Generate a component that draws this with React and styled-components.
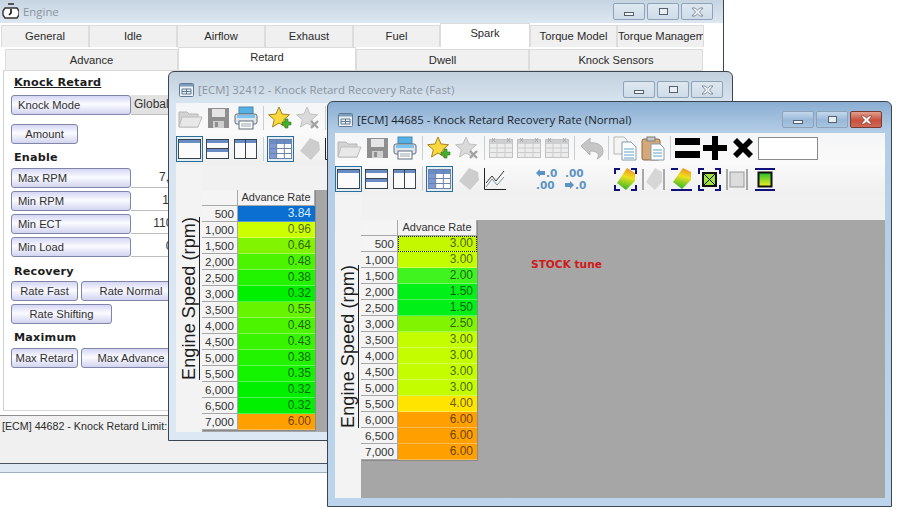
import React from "react";
import styled, { createGlobalStyle } from "styled-components";

const GlobalStyle = createGlobalStyle`
  html, body { margin: 0; padding: 0; background: #fff; }
  #root { width: 897px; height: 511px; position: relative; overflow: hidden; }
`;

const Desktop = styled.div`
  position: relative;
  width: 897px;
  height: 511px;
  font-family: "Liberation Sans", Arial, sans-serif;
  font-size: 11px;
  color: #222;
`;

/* windows sit on a free desktop, so they are the only absolute parts */
const Win = styled.div`
  position: absolute;
  left: ${(p) => p.$x}px;
  top: ${(p) => p.$y}px;
  width: ${(p) => p.$w}px;
  height: ${(p) => p.$h}px;
  box-sizing: border-box;
  border: 1px solid #3c4650;
  border-radius: 6px 6px 0 0;
  display: flex;
  flex-direction: column;
  padding: 0 6px 8px 7px;
  background: ${(p) =>
    p.$active
      ? "linear-gradient(180deg,#8aaed2 0,#b4cde6 30px,#bcd4ec 100%)"
      : "linear-gradient(180deg,#c2d0de 0,#d8e4ef 30px,#dce8f3 100%)"};
`;

const TitleBar = styled.div`
  height: 31px;
  box-sizing: border-box;
  padding: 4px 0 0 3px;
  flex: none;
  display: flex;
  align-items: center;
  gap: 4px;
`;

const TitleText = styled.span`
  flex: 1;
  font-family: "Open Sans", "Noto Sans", sans-serif;
  font-size: 11.4px;
  white-space: nowrap;
  color: ${(p) => (p.$active ? "#20262c" : "#8b959f")};
`;

const Caption = styled.div`
  display: flex;
  gap: 2px;
  padding-right: ${(p) => p.$pr || 3}px;
`;

const CapBtn = styled.div`
  width: 32px;
  height: 17px;
  box-sizing: border-box;
  border: 1px solid ${(p) => (p.$close && p.$active ? "#7a3a30" : "#8ea3b8")};
  border-radius: 2px;
  display: flex;
  align-items: center;
  justify-content: center;
  background: ${(p) =>
    p.$close && p.$active
      ? "linear-gradient(180deg,#e0a090,#c9503c 55%,#cf6a58)"
      : p.$active
      ? "linear-gradient(180deg,#c4d8ec,#98b8d8 55%,#a8c4e0)"
      : "linear-gradient(180deg,#dde7f0,#cfdce8)"};
`;

const MinGlyph = styled.span`
  width: 10px;
  height: 4px;
  margin-top: 4px;
  border: 1px solid #55606c;
  background: #f2f5f8;
  box-sizing: border-box;
`;

const MaxGlyph = styled.span`
  width: 9px;
  height: 7px;
  border: 1px solid #55606c;
  background: #e8eef4;
  box-sizing: border-box;
`;

const Client = styled.div`
  flex: 1;
  min-height: 0;
  display: flex;
  flex-direction: column;
  background: #f1f1f1;
`;

const ToolRow = styled.div`
  height: ${(p) => p.$h}px;
  flex: none;
  display: flex;
  align-items: center;
  padding-left: ${(p) => p.$pl}px;
  overflow: hidden;
  background: ${(p) => p.$bg};
`;

const Slot = styled.div`
  flex: none;
  margin-left: ${(p) => p.$ml || 0}px;
  display: flex;
`;

const Sep = styled.div`
  flex: none;
  width: 1px;
  height: 24px;
  margin-left: ${(p) => p.$ml}px;
  background: #c9ced3;
`;

const Selected = styled.div`
  flex: none;
  width: 27px;
  height: 26px;
  box-sizing: border-box;
  margin-left: ${(p) => p.$ml || 0}px;
  border: 1px solid #2c6f96;
  background: #e2eef6;
  display: flex;
  align-items: center;
  justify-content: center;
`;

const ValueBox = styled.div`
  flex: none;
  width: 60px;
  height: 23px;
  margin-left: 5px;
  box-sizing: border-box;
  border: 1px solid #8a8a8a;
  background: #fff;
`;

const Body = styled.div`
  flex: 1;
  min-height: 0;
  display: flex;
`;

const AxisCol = styled.div`
  width: 26px;
  flex: none;
  display: flex;
  align-items: center;
  justify-content: center;
  background: #f3f3f3;
`;

const AxisLabel = styled.span`
  writing-mode: vertical-rl;
  transform: rotate(180deg);
  font-size: 18px;
  letter-spacing: 0.1px;
  text-decoration: underline;
  white-space: nowrap;
  color: #1d1d1d;
`;

const Main = styled.div`
  flex: 1;
  min-width: 0;
  display: flex;
  flex-direction: column;
`;

const Spacer = styled.div`
  height: 25px;
  flex: none;
`;

const GridArea = styled.div`
  flex: 1;
  position: relative;
  background: #a6a6a6;
`;

const Table = styled.div`
  display: grid;
  grid-template-columns: ${(p) => p.$c1}px ${(p) => p.$c2}px;
  grid-auto-rows: 16px;
  width: max-content;
  box-shadow: 1px 1px 0 #8a8a8a;
`;

const HeadCell = styled.div`
  background: #f4f4f4;
  border: 1px solid #a8a8a8;
  border-width: 0 1px 1px 0;
  box-sizing: border-box;
  font-size: ${(p) => (p.$right ? 11.6 : 11)}px;
  line-height: 15px;
  text-align: ${(p) => (p.$right ? "right" : "center")};
  padding-right: ${(p) => (p.$right ? 3 : 0)}px;
  color: #333;
  white-space: nowrap;
`;

const ValCell = styled.div`
  background: ${(p) => p.$bg};
  box-sizing: border-box;
  border-bottom: 1px solid rgba(255, 255, 255, 0.3);
  outline: ${(p) => (p.$focus ? "1px dotted #222" : "none")};
  outline-offset: -1px;
  font-size: 12px;
  line-height: 15px;
  text-align: right;
  padding-right: 4px;
  color: ${(p) => (p.$light ? "#d8ecff" : "rgba(0,0,0,.62)")};
`;

const StockNote = styled.span`
  position: absolute;
  left: 170px;
  top: 38px;
  font-family: "DejaVu Sans", sans-serif;
  font-weight: 700;
  font-size: 10.6px;
  color: #cf1a1a;
`;

/* Engine window parts */
const EngineWin = styled.div`
  position: absolute;
  left: 0;
  top: 0;
  width: 724px;
  height: 473px;
  box-sizing: border-box;
  border-right: 1px solid #3c4650;
  border-bottom: 1px solid #9fb0c0;
  display: flex;
  flex-direction: column;
  background: #dfe9f3;
`;

const EngineTitle = styled.div`
  height: 23px;
  flex: none;
  display: flex;
  align-items: center;
  padding-left: 2px;
  gap: 4px;
  background: linear-gradient(180deg, #c6d4e2, #dde7f1);
`;

const EngineClient = styled.div`
  flex: 1;
  min-height: 0;
  display: flex;
  flex-direction: column;
  background: #fff;
  margin-bottom: 8px;
  border-bottom: 1px solid #4a545e;
`;

const TabRow = styled.div`
  display: flex;
  width: 703px;
  box-sizing: border-box;
  height: ${(p) => p.$h}px;
  flex: none;
  align-items: flex-end;
  padding-left: ${(p) => p.$pl}px;
`;

const Tab = styled.div`
  width: ${(p) => p.$w}px;
  flex: none;
  box-sizing: border-box;
  height: ${(p) => (p.$on ? p.$tall : p.$tall - 2)}px;
  border: 1px solid #dcdcdc;
  border-bottom: none;
  background: ${(p) => (p.$on ? "#fff" : "#f0f0f0")};
  text-align: center;
  font-size: 11.2px;
  line-height: ${(p) => (p.$on ? 19 : 21)}px;
  white-space: nowrap;
  overflow: hidden;
  color: #2a2a2a;
`;

const Panel = styled.div`
  flex: 1;
  min-height: 0;
  margin: 0 0 4px 3px;
  width: 700px;
  box-sizing: border-box;
  border-left: 1px solid #cfcfcf;
  border-top: 1px solid #d8d8d8;
  border-bottom: 1px solid #d8d8d8;
  padding: 4px 0 0 7px;
  display: flex;
  flex-direction: column;
  background: #fff;
`;

const Heading = styled.div`
  font-family: "DejaVu Sans", sans-serif;
  font-weight: 700;
  font-size: 11.2px;
  line-height: 14px;
  letter-spacing: 0.2px;
  color: #1c1c1c;
  margin: ${(p) => p.$m || "0"};
  text-decoration: ${(p) => (p.$u ? "underline" : "none")};
`;

const Row = styled.div`
  display: flex;
  height: 20px;
  gap: ${(p) => p.$gap || 0}px;
  margin-top: ${(p) => p.$mt || 0}px;
`;

const PurpleBtn = styled.div`
  width: ${(p) => p.$w}px;
  flex: none;
  box-sizing: border-box;
  height: 20px;
  border: 1px solid #7f86a8;
  border-radius: 3px;
  background: linear-gradient(180deg, #d4d6f4 0, #fbfbff 45%, #d2d4f0 100%);
  line-height: 18px;
  font-size: 11.2px;
  text-align: ${(p) => (p.$left ? "left" : "center")};
  padding-left: ${(p) => (p.$left ? 6 : 0)}px;
  color: #2f2f2f;
  white-space: nowrap;
`;

const FieldVal = styled.div`
  width: 58px;
  flex: none;
  box-sizing: border-box;
  height: 20px;
  line-height: 19px;
  text-align: ${(p) => (p.$grey ? "left" : "right")};
  font-size: 12px;
  border-bottom: 1px solid #bdbdbd;
  background: ${(p) => (p.$grey ? "#e2e2e2" : "#fff")};
  padding: ${(p) => (p.$grey ? "0 0 0 3px" : "0")};
  color: #333;
`;

const StatusArea = styled.div`
  flex: none;
  height: 44px;
  background: #f0f0f0;
  border-top: 1px solid #8e8e8e;
  padding: 3px 0 0 2px;
  font-size: 10.7px;
  line-height: 15px;
  color: #2c2c2c;
  white-space: nowrap;
`;

/* icons */
const Folder = () => (
  <svg width="25" height="22" viewBox="0 0 25 22">
    <path d="M1 5h8l2 2h9v13H1z" fill="#d3d3d3" stroke="#b5b5b5" />
    <path d="M1 20l3-10h20l-4 10z" fill="#e8e8e8" stroke="#bdbdbd" />
  </svg>
);
const Floppy = () => (
  <svg width="21" height="22" viewBox="0 0 21 22">
    <path d="M0 1h21v20H0z" fill="#8f8f8f" />
    <rect x="4" y="2" width="13" height="8" fill="#e4e4e4" />
    <rect x="5" y="14" width="11" height="7" fill="#cfcfcf" />
    <rect x="7" y="15" width="3" height="5" fill="#8f8f8f" />
  </svg>
);
const Printer = () => (
  <svg width="24" height="24" viewBox="0 0 24 24">
    <rect x="5" y="1" width="14" height="7" fill="#55b0e6" stroke="#4c86a8" />
    <rect x="1" y="8" width="22" height="10" rx="2" fill="#dfe5ea" stroke="#5f6f7c" />
    <rect x="3" y="9" width="18" height="3" fill="#7cc4ee" />
    <rect x="5" y="15" width="14" height="8" fill="#fff" stroke="#5f6f7c" />
    <path d="M7 18h10M7 20h10" stroke="#9aa5ae" />
  </svg>
);
const starPath = "M11 1l3 7 7.500 .7-5.700 5 1.800 7.300L11 17l-6.500 4 1.800-7.300-5.700-5L8 8z";
const StarAdd = () => (
  <svg width="25" height="24" viewBox="0 0 25 24">
    <path d={starPath} fill="#f8d83c" stroke="#a8841e" />
    <path d="M17 13h3v3h3v3h-3v3h-3v-3h-3v-3h3z" fill="#46b030" stroke="#2c7a1e" strokeWidth=".6" />
  </svg>
);
const StarGrey = () => (
  <svg width="24" height="24" viewBox="0 0 24 24">
    <path d={starPath} fill="#dadada" stroke="#c0c0c0" />
    <path d="M15 15l7 7M22 15l-7 7" stroke="#a2a2a2" strokeWidth="2.400" />
  </svg>
);
const GridGrey = () => (
  <svg width="24" height="22" viewBox="0 0 24 22">
    <rect x=".5" y="2.500" width="23" height="18" fill="#ececec" stroke="#c2c2c2" />
    <rect x="1" y="3" width="22" height="4" fill="#cfcfcf" />
    <path d="M1 11h22M1 15.500h22M8 3v17M16 3v17" stroke="#cbcbcb" />
    <path d="M3 1l3 4M6 1L3 5M18 1l3 4M21 1l-3 4" stroke="#a8a8a8" />
  </svg>
);
const Undo = () => (
  <svg width="24" height="24" viewBox="0 0 24 24">
    <path d="M1 10l9-8v5c8-1 13 3 13 8 0 4-2 6-6 8 2-3 3-8-7-8v4z" fill="#c6c6c6" stroke="#b4b4b4" />
  </svg>
);
const Copy = () => (
  <svg width="24" height="25" viewBox="0 0 24 25">
    <path d="M1 1h10l3 3v14H1z" fill="#f4f4f4" stroke="#b9b9b9" />
    <path d="M9 6h9l5 5v13H9z" fill="#fff" stroke="#8a9aa8" />
    <path d="M11 13h10M11 16h10M11 19h10M11 22h10" stroke="#5ea0cc" />
  </svg>
);
const Paste = () => (
  <svg width="24" height="25" viewBox="0 0 24 25">
    <rect x="1" y="3" width="18" height="21" rx="2" fill="#d4a878" stroke="#8a6a48" />
    <rect x="6" y="1" width="8" height="4" fill="#c8c8c8" stroke="#7a7a7a" />
    <path d="M10 8h9l4 4v12H10z" fill="#fff" stroke="#8a9aa8" />
    <path d="M12 14h9M12 17h9M12 20h9" stroke="#5ea0cc" />
  </svg>
);
const Equals = () => (
  <svg width="25" height="20" viewBox="0 0 25 20"><path d="M0 0h25v7H0zM0 13h25v7H0z" fill="#000" /></svg>
);
const Plus = () => (
  <svg width="24" height="24" viewBox="0 0 24 24"><path d="M9 0h6v9h9v6h-9v9H9v-9H0V9h9z" fill="#000" /></svg>
);
const Times = () => (
  <svg width="20" height="20" viewBox="0 0 20 20"><path d="M0 4l4-4 6 6 6-6 4 4-6 6 6 6-4 4-6-6-6 6-4-4 6-6z" fill="#000" /></svg>
);
const PaneFull = () => (
  <svg width="23" height="20" viewBox="0 0 24 20" preserveAspectRatio="none">
    <rect x=".5" y=".5" width="23" height="19" fill="#fbfbfb" stroke="#33414c" />
    <rect x="1" y="1" width="22" height="3" fill="#6a8cc4" />
  </svg>
);
const PaneRows = () => (
  <svg width="23" height="20" viewBox="0 0 24 20" preserveAspectRatio="none">
    <rect x=".5" y=".5" width="23" height="19" fill="#fbfbfb" stroke="#33414c" />
    <rect x="1" y="1" width="22" height="3" fill="#6a8cc4" />
    <rect x="1" y="10" width="22" height="3" fill="#6a8cc4" />
    <path d="M1 9.500h22" stroke="#33414c" />
  </svg>
);
const PaneCols = () => (
  <svg width="23" height="20" viewBox="0 0 24 20" preserveAspectRatio="none">
    <rect x=".5" y=".5" width="23" height="19" fill="#fbfbfb" stroke="#33414c" />
    <rect x="1" y="1" width="22" height="3" fill="#6a8cc4" />
    <path d="M12 1v18" stroke="#33414c" />
  </svg>
);
const GridBlue = () => (
  <svg width="23" height="20" viewBox="0 0 24 20" preserveAspectRatio="none">
    <rect x=".5" y=".5" width="23" height="19" fill="#fff" stroke="#6a7fa8" />
    <rect x="1" y="1" width="22" height="4" fill="#6a8cc4" />
    <rect x="1" y="5" width="7" height="14" fill="#7f98d4" />
    <path d="M1 9.500h22M1 14.500h22M8 1v18M16 1v18" stroke="#6a7fa8" />
  </svg>
);
const Diamond = () => (
  <svg width="21" height="24" viewBox="0 0 21 24">
    <path d="M11 1l9 4 1 8-9 10L1 14z" fill="#cdcdcd" />
  </svg>
);
const LineChart = () => (
  <svg width="22" height="22" viewBox="0 0 22 22">
    <path d="M.5 0v21.500H22" fill="none" stroke="#222" />
    <path d="M2 15l6-7 4 5 8-10" fill="none" stroke="#333" />
    <path d="M2 19l6-8 5 6 7-8" fill="none" stroke="#7d8f9c" />
  </svg>
);
const DecLeft = () => (
  <svg width="24" height="24" viewBox="0 0 24 24" fontFamily="DejaVu Sans" fontWeight="700" fontSize="10.500" fill="#5b93c4">
    <path d="M1 6l4-4v2h5v4H5v2z" fill="#5b93c4" />
    <text x="11" y="10">.0</text>
    <text x="1" y="22">.00</text>
  </svg>
);
const DecRight = () => (
  <svg width="24" height="24" viewBox="0 0 24 24" fontFamily="DejaVu Sans" fontWeight="700" fontSize="10.500" fill="#5b93c4">
    <text x="1" y="10">.00</text>
    <path d="M1 16h5v-2l4 4-4 4v-2H1z" fill="#5b93c4" />
    <text x="11" y="22">.0</text>
  </svg>
);
const Brackets = ({ color = "#10107a" }) => (
  <path d="M1 6V1h5M17 1h5v5M1 17v5h5M17 22h5v-5" fill="none" stroke={color} strokeWidth="2" />
);
const HeatStops = () => (
  <>
    <stop offset="0" stopColor="#f09020" />
    <stop offset=".4" stopColor="#eee020" />
    <stop offset="1" stopColor="#28b828" />
  </>
);
const ColorDiamond = () => (
  <svg width="23" height="23" viewBox="0 0 23 23">
    <defs>
      <linearGradient id="heatA" x1=".6" y1="0" x2=".4" y2="1"><HeatStops /></linearGradient>
    </defs>
    <Brackets />
    <path d="M13 0l8 5v8l-9 9-9-7z" fill="url(#heatA)" />
  </svg>
);
const GreyDiamond = () => (
  <svg width="23" height="23" viewBox="0 0 23 23">
    <path d="M1 1v21M22 1v21" stroke="#a8a8a8" strokeWidth="2" />
    <path d="M13 0l7 4v10l-7 8-9-8z" fill="#d6d6d6" />
  </svg>
);
const ColorFlat = () => (
  <svg width="21" height="23" viewBox="0 0 21 23">
    <defs>
      <linearGradient id="heatB" x1=".6" y1="0" x2=".4" y2="1"><HeatStops /></linearGradient>
    </defs>
    <path d="M0 22h21" stroke="#10107a" strokeWidth="2" />
    <path d="M0 1h7" stroke="#10107a" strokeWidth="2" />
    <path d="M12 0l8 4v8l-9 9-9-7z" fill="url(#heatB)" />
  </svg>
);
const BoxedX = () => (
  <svg width="23" height="23" viewBox="0 0 23 23">
    <Brackets />
    <rect x="5" y="5" width="13" height="13" fill="#a0e040" stroke="#101010" strokeWidth="2" />
    <path d="M5 5l13 13M18 5L5 18" stroke="#101010" />
  </svg>
);
const GreyPanel = () => (
  <svg width="22" height="23" viewBox="0 0 22 23">
    <path d="M1 1v21M21 1v21" stroke="#a8a8a8" strokeWidth="2" />
    <rect x="4" y="4" width="14" height="15" fill="#dcdcdc" stroke="#9a9a9a" />
  </svg>
);
const GreenPanel = () => (
  <svg width="20" height="23" viewBox="0 0 20 23">
    <defs>
      <linearGradient id="heatC" x1="0" y1="0" x2="0" y2="1">
        <stop offset="0" stopColor="#20c030" />
        <stop offset="1" stopColor="#f4f020" />
      </linearGradient>
    </defs>
    <path d="M0 1h20M0 22h20" stroke="#10107a" strokeWidth="2" />
    <rect x="3.500" y="4.500" width="13" height="14" fill="url(#heatC)" stroke="#101010" strokeWidth="2" />
  </svg>
);
const WinIcon = () => (
  <svg width="15" height="14" viewBox="0 0 15 14">
    <rect x=".5" y=".5" width="14" height="13" rx="1" fill="#eef2f6" stroke="#5f7a94" />
    <rect x="1" y="1" width="13" height="2.500" fill="#7d9cbc" />
    <path d="M3 6h9v5H3zM7.500 6v5M3 8.500h9" fill="none" stroke="#5f7a94" />
  </svg>
);
const EngineIcon = () => (
  <svg width="17" height="17" viewBox="0 0 17 17">
    <rect x="6" y="0" width="6" height="2" fill="#555" />
    <path d="M3 5h12l2 3v4l-2 3H3L1 12V8z" fill="#fff" stroke="#333" strokeWidth="1.400" />
    <path d="M9 6v4l-2 2" stroke="#111" fill="none" strokeWidth="1.600" />
  </svg>
);
const CloseGlyph = ({ active }) => (
  <svg width="13" height="10" viewBox="0 0 13 10">
    <path d="M1 1h3l2.500 2L9 1h3L8.500 5 12 9H9L6.500 7 4 9H1l3.500-4z" fill={active ? "#fff" : "#e8eef4"} stroke={active ? "#8a3a2c" : "#66727e"} strokeWidth=".7" />
  </svg>
);

const CaptionBtns = ({ active, pr }) => (
  <Caption $pr={pr}>
    <CapBtn $active={active}><MinGlyph /></CapBtn>
    <CapBtn $active={active}><MaxGlyph /></CapBtn>
    <CapBtn $active={active} $close><CloseGlyph active={active} /></CapBtn>
  </Caption>
);

const Toolbars = () => (
  <>
    <ToolRow $h={30} $pl={2} $bg="linear-gradient(180deg,#f4f5f6,#fafafa)">
      <Slot><Folder /></Slot>
      <Slot $ml={5}><Floppy /></Slot>
      <Slot $ml={5}><Printer /></Slot>
      <Sep $ml={5} />
      <Slot $ml={4}><StarAdd /></Slot>
      <Slot $ml={3}><StarGrey /></Slot>
      <Sep $ml={5} />
      <Slot $ml={4}><GridGrey /></Slot>
      <Slot $ml={4}><GridGrey /></Slot>
      <Slot $ml={4}><GridGrey /></Slot>
      <Sep $ml={5} />
      <Slot $ml={5}><Undo /></Slot>
      <Sep $ml={4} />
      <Slot $ml={4}><Copy /></Slot>
      <Slot $ml={4}><Paste /></Slot>
      <Sep $ml={5} />
      <Slot $ml={4}><Equals /></Slot>
      <Slot $ml={3}><Plus /></Slot>
      <Slot $ml={6}><Times /></Slot>
      <ValueBox />
    </ToolRow>
    <ToolRow $h={32} $pl={0} $bg="linear-gradient(180deg,#fafafa,#efefef)">
      <Selected><PaneFull /></Selected>
      <Slot $ml={3}><PaneRows /></Slot>
      <Slot $ml={5}><PaneCols /></Slot>
      <Sep $ml={6} />
      <Selected $ml={3}><GridBlue /></Selected>
      <Slot $ml={5}><Diamond /></Slot>
      <Slot $ml={5}><LineChart /></Slot>
      <Slot $ml={29}><DecLeft /></Slot>
      <Slot $ml={5}><DecRight /></Slot>
      <Slot $ml={26}><ColorDiamond /></Slot>
      <Slot $ml={5}><GreyDiamond /></Slot>
      <Slot $ml={6}><ColorFlat /></Slot>
      <Slot $ml={6}><BoxedX /></Slot>
      <Slot $ml={5}><GreyPanel /></Slot>
      <Slot $ml={7}><GreenPanel /></Slot>
    </ToolRow>
  </>
);

const fastRows = [
  ["500", "3.84", "#0b6fd2", true],
  ["1,000", "0.96", "#ccff00"],
  ["1,500", "0.64", "#80f400"],
  ["2,000", "0.48", "#4cf400"],
  ["2,500", "0.38", "#22f400"],
  ["3,000", "0.32", "#00f000"],
  ["3,500", "0.55", "#66f400"],
  ["4,000", "0.48", "#4cf400"],
  ["4,500", "0.43", "#38f400"],
  ["5,000", "0.38", "#22f400"],
  ["5,500", "0.35", "#14f400"],
  ["6,000", "0.32", "#00f000"],
  ["6,500", "0.32", "#00f000"],
  ["7,000", "6.00", "#ffa000"],
];

const normalRows = [
  ["500", "3.00", "#c4f800"],
  ["1,000", "3.00", "#c4fc00"],
  ["1,500", "2.00", "#40f420"],
  ["2,000", "1.50", "#00f018"],
  ["2,500", "1.50", "#00f018"],
  ["3,000", "2.50", "#80f400"],
  ["3,500", "3.00", "#c4fc00"],
  ["4,000", "3.00", "#c4fc00"],
  ["4,500", "3.00", "#c4fc00"],
  ["5,000", "3.00", "#c4fc00"],
  ["5,500", "4.00", "#ffe400"],
  ["6,000", "6.00", "#ffa000"],
  ["6,500", "6.00", "#ffa000"],
  ["7,000", "6.00", "#ffa000"],
];

const RateTable = ({ rows, c1, c2, focusFirst }) => (
  <Table $c1={c1} $c2={c2}>
    <HeadCell />
    <HeadCell>Advance Rate</HeadCell>
    {rows.map(([rpm, val, bg, light], i) => (
      <React.Fragment key={rpm}>
        <HeadCell $right>{rpm}</HeadCell>
        <ValCell $bg={bg} $light={light} $focus={focusFirst && i === 0}>{val}</ValCell>
      </React.Fragment>
    ))}
  </Table>
);

const topTabs = [
  ["General", 88], ["Idle", 88], ["Airflow", 88], ["Exhaust", 88], ["Fuel", 87],
  ["Spark", 90, true], ["Torque Model", 87], ["Torque Managem", 87],
];
const subTabs = [
  ["Advance", 173], ["Retard", 178, true], ["Dwell", 173], ["Knock Sensors", 174],
];

const fields = [
  ["Max RPM", "7,000"],
  ["Min RPM", "1000"],
  ["Min ECT", "110.00"],
  ["Min Load", "0.00"],
];

export default function App() {
  return (
    <Desktop>
      <GlobalStyle />

      <EngineWin>
        <EngineTitle>
          <EngineIcon />
          <TitleText>Engine</TitleText>
          <CaptionBtns pr={10} />
        </EngineTitle>
        <EngineClient>
          <TabRow $h={24} $pl={1}>
            {topTabs.map(([name, w, on]) => (
              <Tab key={name} $w={w} $on={on} $tall={24}>{name}</Tab>
            ))}
          </TabRow>
          <TabRow $h={23} $pl={5}>
            {subTabs.map(([name, w, on]) => (
              <Tab key={name} $w={w} $on={on} $tall={23}>{name}</Tab>
            ))}
          </TabRow>
          <Panel>
            <Heading $u $m="1px 0 5px 3px">Knock Retard</Heading>
            <Row>
              <PurpleBtn $w={120} $left>Knock Mode</PurpleBtn>
              <FieldVal $grey>Global</FieldVal>
            </Row>
            <Row $mt={9}>
              <PurpleBtn $w={67}>Amount</PurpleBtn>
            </Row>
            <Heading $m="7px 0 3px 3px">Enable</Heading>
            {fields.map(([label, val], i) => (
              <Row key={label} $mt={i ? 3 : 0}>
                <PurpleBtn $w={120} $left>{label}</PurpleBtn>
                <FieldVal>{val}</FieldVal>
              </Row>
            ))}
            <Heading $m="8px 0 2px 3px">Recovery</Heading>
            <Row $gap={3}>
              <PurpleBtn $w={67}>Rate Fast</PurpleBtn>
              <PurpleBtn $w={100}>Rate Normal</PurpleBtn>
            </Row>
            <Row $mt={3}>
              <PurpleBtn $w={101}>Rate Shifting</PurpleBtn>
            </Row>
            <Heading $m="7px 0 3px 3px">Maximum</Heading>
            <Row $gap={3}>
              <PurpleBtn $w={67}>Max Retard</PurpleBtn>
              <PurpleBtn $w={100}>Max Advance</PurpleBtn>
            </Row>
          </Panel>
          <StatusArea>[ECM] 44682 - Knock Retard Limit:</StatusArea>
        </EngineClient>
      </EngineWin>

      <Win $x={168} $y={71} $w={565} $h={370}>
        <TitleBar>
          <WinIcon />
          <TitleText>[ECM] 32412 - Knock Retard Recovery Rate (Fast)</TitleText>
          <CaptionBtns />
        </TitleBar>
        <Client>
          <Toolbars />
          <Body>
            <AxisCol><AxisLabel>Engine Speed (rpm)</AxisLabel></AxisCol>
            <Main>
              <Spacer />
              <GridArea>
                <RateTable rows={fastRows} c1={36} c2={77} />
              </GridArea>
            </Main>
          </Body>
        </Client>
      </Win>

      <Win $x={327} $y={101} $w={565} $h={406} $active>
        <TitleBar>
          <WinIcon />
          <TitleText $active>[ECM] 44685 - Knock Retard Recovery Rate (Normal)</TitleText>
          <CaptionBtns active />
        </TitleBar>
        <Client>
          <Toolbars />
          <Body>
            <AxisCol><AxisLabel>Engine Speed (rpm)</AxisLabel></AxisCol>
            <Main>
              <Spacer />
              <GridArea>
                <RateTable rows={normalRows} c1={37} c2={79} focusFirst />
                <StockNote>STOCK tune</StockNote>
              </GridArea>
            </Main>
          </Body>
        </Client>
      </Win>
    </Desktop>
  );
}
